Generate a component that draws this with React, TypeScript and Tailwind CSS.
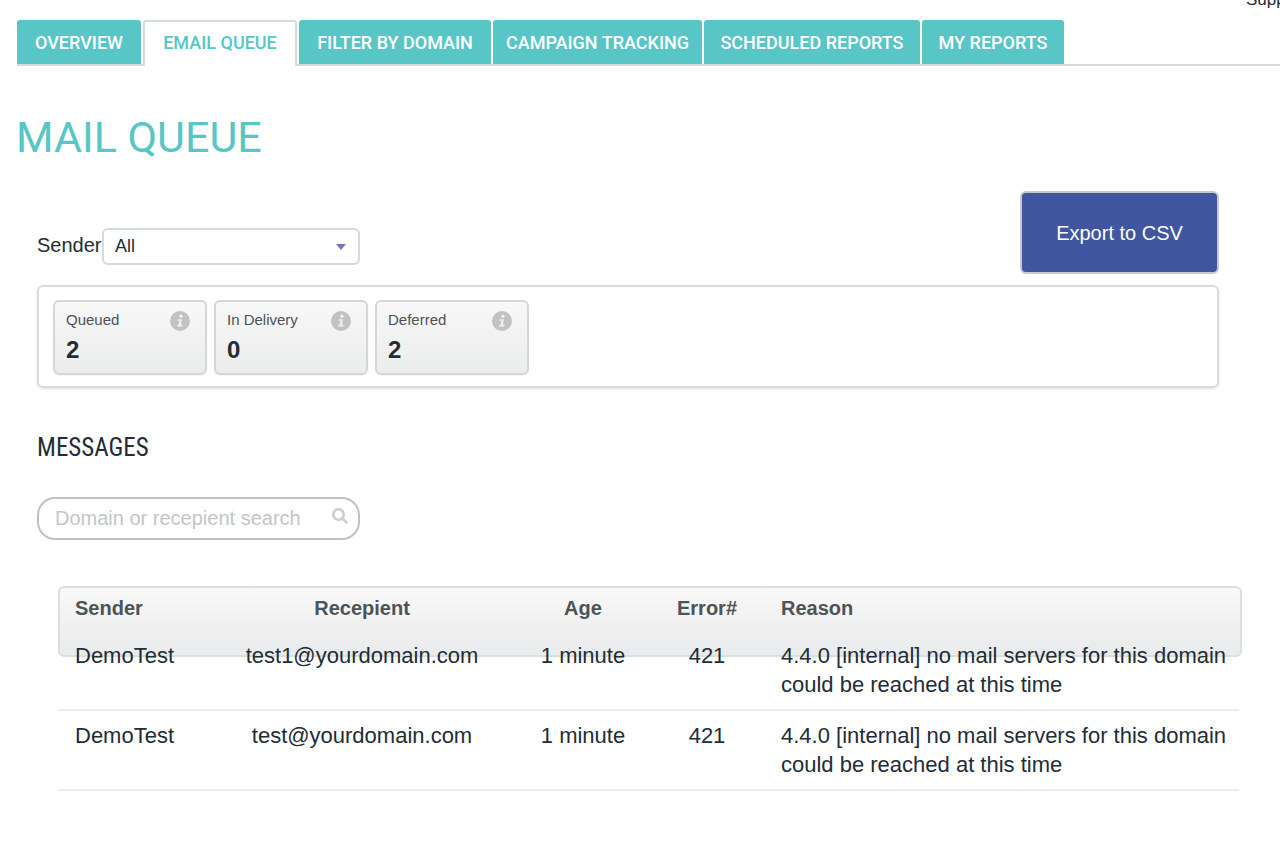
import { FaSearch } from "react-icons/fa";

const tabs = [
  { name: "Overview", width: "w-[124px]" },
  { name: "Email Queue", width: "w-[154px]", active: true },
  { name: "Filter by Domain", width: "w-[192px]" },
  { name: "Campaign Tracking", width: "w-[209px]" },
  { name: "Scheduled Reports", width: "w-[216px]" },
  { name: "My Reports", width: "w-[142px]" },
];

const stats = [
  { label: "Queued", value: 2 },
  { label: "In Delivery", value: 0 },
  { label: "Deferred", value: 2 },
];

const reason =
  "4.4.0 [internal] no mail servers for this domain could be reached at this time";

const messages = [
  { sender: "DemoTest", recipient: "test1@yourdomain.com", age: "1 minute", error: 421, reason },
  { sender: "DemoTest", recipient: "test@yourdomain.com", age: "1 minute", error: 421, reason },
];

const InfoIcon = () => (
  <svg viewBox="0 0 20 20" className="mt-px size-5" aria-hidden="true">
    <circle cx="10" cy="10" r="10" fill="#c1c2c3" />
    <circle cx="11" cy="5.2" r="1.6" fill="#f6f6f6" />
    <path
      d="M7.6 8.2h4.3l-1 5.6h1.6v1.6H7.2v-1.6h1.5l.7-4H7.6z"
      fill="#f1f1f1"
    />
  </svg>
);

const Tabs = () => (
  <nav className="ml-[17px] flex gap-[2px] border-b-2 border-[#d5dada] font-[Roboto,sans-serif] text-[18px] font-medium uppercase">
    {tabs.map((tab) => (
      <a
        key={tab.name}
        href="#"
        className={
          tab.active
            ? `${tab.width} -mb-[2px] flex h-[46px] items-center justify-center rounded-t-[3px] border-2 border-b-0 border-[#d5dada] bg-white pb-1 whitespace-nowrap text-[#58c6c6]`
            : `${tab.width} flex h-11 items-center justify-center rounded-t-[3px] bg-[#58c6c6] whitespace-nowrap text-white`
        }
      >
        {tab.name}
      </a>
    ))}
  </nav>
);

const MessageTable = () => (
  <div className="mt-[46px] mr-[38px] ml-[58px] grid">
    {/* The header panel runs on under the first row */}
    <div className="col-start-1 row-start-1 h-[71px] rounded-md border-2 border-[#dadfdf] bg-linear-to-b from-[#f9f9f9] via-[#efefef] via-60% to-[#e9ebec]" />
    <div className="z-10 col-start-1 row-start-1 pr-[3px]">
      <table className="w-full table-fixed border-collapse text-center text-[22px] leading-[29px]">
        <thead className="text-[20px] text-[#4d5357]">
          <tr className="h-[45px]">
            <th className="w-[155px] pl-[17px] text-left">Sender</th>
            <th className="w-[298px]">Recepient</th>
            <th className="w-[144px]">Age</th>
            <th className="w-[104px]">Error#</th>
            <th className="pl-[22px] text-left">Reason</th>
          </tr>
        </thead>
        <tbody>
          {messages.map((message) => (
            <tr
              key={message.recipient}
              className="border-b-2 border-[#ebecec] align-top"
            >
              <td className="py-[10px] pl-[17px] text-left">{message.sender}</td>
              <td className="py-[10px]">{message.recipient}</td>
              <td className="py-[10px]">{message.age}</td>
              <td className="py-[10px]">{message.error}</td>
              <td className="py-[10px] pl-[22px] text-left">{message.reason}</td>
            </tr>
          ))}
        </tbody>
      </table>
    </div>
  </div>
);

const App = () => {
  return (
    <div className="overflow-hidden bg-white pb-16 font-['Liberation_Sans',Arial,sans-serif] text-[#222d35]">
      <header className="flex h-5 justify-end overflow-hidden">
        <a
          href="#"
          className="-mt-[10px] w-[34px] overflow-hidden text-[17px] leading-5 whitespace-nowrap"
        >
          Support
        </a>
      </header>
      <Tabs />
      <main>
        <h1 className="mt-[45px] pl-4 font-[Roboto,sans-serif] text-[43px] leading-[52px] text-[#58c6c6]">
          MAIL QUEUE
        </h1>
        <section className="mr-[61px] ml-[37px]">
          <div className="mt-7 flex items-end justify-between">
            <div className="mb-[9px] flex items-center">
              <label htmlFor="sender" className="w-[65px] pb-1 text-[20px]">
                Sender
              </label>
              <div className="relative">
                <select
                  id="sender"
                  className="block h-[37px] w-[258px] appearance-none rounded-md border-2 border-[#d5dada] bg-white pl-[11px] text-[18px]"
                >
                  <option>All</option>
                </select>
                <svg
                  viewBox="0 0 10 6"
                  className="pointer-events-none absolute top-4 right-[14px] h-[6px] w-[10px]"
                >
                  <path d="M0 0h10L5 6z" fill="#8170b9" />
                </svg>
              </div>
            </div>
            <button
              type="button"
              className="h-[83px] w-[199px] rounded-md border-2 border-[#c5c9d0] bg-[#4056a1] text-[20px] text-white"
            >
              Export to CSV
            </button>
          </div>
          <div className="mt-[11px] flex gap-[7px] rounded-md border-2 border-[#d8dcdc] px-[14px] pt-[13px] pb-[11px] shadow-sm">
            {stats.map((stat) => (
              <div
                key={stat.label}
                className="h-[75px] w-[154px] rounded-md border-2 border-[#d3d7d7] bg-linear-to-b from-[#f8f8f8] to-[#ebecec] pt-2 pr-[15px] pl-[11px] shadow-xs"
              >
                <div className="flex h-5 justify-between">
                  <span className="text-[15px] leading-5 text-[#4d5357]">
                    {stat.label}
                  </span>
                  <InfoIcon />
                </div>
                <div className="mt-1 text-[24px] leading-8 font-bold">
                  {stat.value}
                </div>
              </div>
            ))}
          </div>
          <h2 className="mt-11 font-['Roboto_Condensed',Roboto,sans-serif] text-[25px] leading-8">
            MESSAGES
          </h2>
          <div className="relative mt-[33px] w-[323px]">
            <input
              type="text"
              aria-label="Domain or recepient search"
              placeholder="Domain or recepient search"
              className="block h-[43px] w-full rounded-[18px] border-2 border-[#bfc2c3] pr-10 pl-4 text-[20px] placeholder:text-[#c3c6c7]"
            />
            <FaSearch className="absolute top-[11px] right-3 size-4 text-[#cbcecf]" />
          </div>
        </section>
        <MessageTable />
      </main>
    </div>
  );
};

export default App;
